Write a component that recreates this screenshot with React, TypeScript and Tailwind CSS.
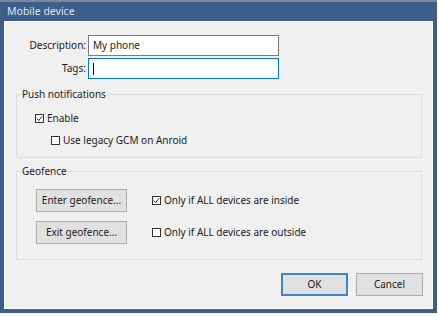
import React from 'react'

const font = { fontFamily: '"Noto Sans", "Open Sans", sans-serif' }

function Check({ checked }: { checked?: boolean }) {
  return (
    <span className="w-[9px] h-[9px] border border-[#333333] bg-white flex items-center justify-center shrink-0">
      {checked && (
        <svg width="7" height="7" viewBox="0 0 7 7">
          <path d="M0.8 3.6 L2.7 5.5 L6.2 1.2" fill="none" stroke="#222" strokeWidth="1" />
        </svg>
      )}
    </span>
  )
}

function CheckRow({ label, checked, className = '' }: { label: string; checked?: boolean; className?: string }) {
  return (
    <div className={`flex items-center gap-[3px] h-[16px] ${className}`}>
      <Check checked={checked} />
      <span>{label}</span>
    </div>
  )
}

function Btn({ children, primary, className = '' }: { children: React.ReactNode; primary?: boolean; className?: string }) {
  return (
    <button
      className={`h-[23px] bg-[#e1e1e1] flex items-center justify-center ${
        primary ? 'border-2 border-[#3a86d4]' : 'border border-[#adadad]'
      } ${className}`}
    >
      {children}
    </button>
  )
}

export default function App() {
  return (
    <div className="w-[439px] h-[316px] bg-white text-[10px] text-[#1b1b1b] leading-[15px]" style={font}>
      <div className="w-[437px] h-[313px] bg-[#3d5e8a] border-t-2 border-[#7c8696] flex flex-col px-[4px] pb-[4px]">
        <div className="h-[19px] flex items-center pl-[3px] text-[#dde5ef] text-[10.5px]">Mobile device</div>
        <div className="flex-1 bg-[#f0f0f0] border border-white flex flex-col">
          {/* fields */}
          <div className="flex flex-col gap-[2px] pt-[13px]">
            <div className="flex items-center gap-[2px]">
              <span className="w-[81px] text-right">Description:</span>
              <div className="w-[191px] h-[21px] bg-white border border-[#7a7a7a] flex items-center pl-[4px]">My phone</div>
            </div>
            <div className="flex items-center gap-[2px]">
              <span className="w-[81px] text-right">Tags:</span>
              <div className="w-[191px] h-[21px] bg-white border border-[#0078d7] flex items-center pl-[4px]">
                <span className="w-px h-[12px] bg-black" />
              </div>
            </div>
          </div>

          {/* push notifications */}
          <fieldset className="mt-[8px] ml-[11px] mr-[10px] border border-[#dcdcdc] px-[5px]">
            <legend className="leading-[15px]">Push notifications</legend>
            <div className="pl-[13px] pt-[8px] pb-[9px] flex flex-col gap-[6px]">
              <CheckRow label="Enable" checked />
              <CheckRow label="Use legacy GCM on Anroid" className="ml-[16px]" />
            </div>
          </fieldset>

          {/* geofence */}
          <fieldset className="mt-[6px] ml-[11px] mr-[10px] border border-[#dcdcdc] px-[5px]">
            <legend className="leading-[15px]">Geofence</legend>
            <div className="pl-[14px] pt-[10px] pb-[15px] flex flex-col gap-[9px]">
              <div className="flex items-center gap-[25px]">
                <Btn className="w-[91px]">Enter geofence...</Btn>
                <CheckRow label="Only if ALL devices are inside" checked />
              </div>
              <div className="flex items-center gap-[25px]">
                <Btn className="w-[91px]">Exit geofence...</Btn>
                <CheckRow label="Only if ALL devices are outside" />
              </div>
            </div>
          </fieldset>

          {/* dialog buttons */}
          <div className="mt-[13px] flex justify-end gap-[8px] pr-[9px]">
            <Btn primary className="w-[67px]">OK</Btn>
            <Btn className="w-[67px]">Cancel</Btn>
          </div>
        </div>
      </div>
    </div>
  )
}
